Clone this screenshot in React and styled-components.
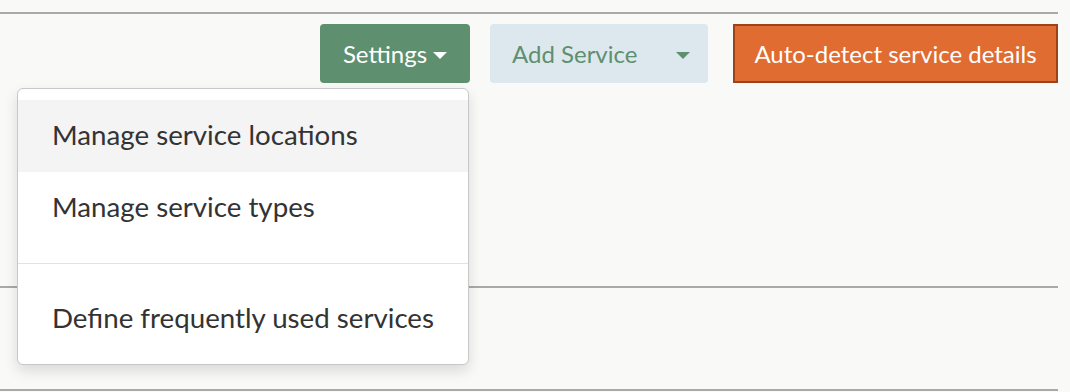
import React from "react";
import styled, { createGlobalStyle } from "styled-components";

const GlobalStyle = createGlobalStyle`
  html, body {
    margin: 0;
    background: #f9f9f7;
    font-family: Lato, "Open Sans", sans-serif;
  }
`;

const Page = styled.div`
  width: 1058px;
  padding-top: 12px;
`;

const Section = styled.div`
  border-top: 2px solid #a9a9a9;
  height: ${props => props.height}px;
`;

const Toolbar = styled.div`
  display: flex;
  justify-content: flex-end;
  align-items: flex-start;
  padding-top: 10px;
`;

const DropdownWrap = styled.div`
  position: relative;
  margin-right: 20px;
`;

const Button = styled.button`
  display: flex;
  align-items: center;
  height: 59px;
  border-radius: 4px;
  border: none;
  font-family: Lato, sans-serif;
  font-size: 24px;
  white-space: nowrap;
  padding: 0;
  cursor: pointer;
`;

const SettingsButton = styled(Button)`
  width: 150px;
  background: #5e8f6f;
  color: #fff;
  justify-content: center;
  gap: 6px;
`;

const AddButton = styled(Button)`
  width: 218px;
  background: #dce8ee;
  color: #5e8f6f;
  justify-content: space-between;
  padding: 0 18px 0 22px;
  margin-right: 25px;
`;

const AutoButton = styled(Button)`
  width: 325px;
  background: #e06c32;
  color: #fff;
  border: 2px solid #9c4318;
  border-radius: 0;
  justify-content: center;
`;

const Caret = styled.span`
  width: 0;
  height: 0;
  border-left: 7px solid transparent;
  border-right: 7px solid transparent;
  border-top: 7px solid ${props => props.color};
  margin-top: 3px;
`;

const Menu = styled.ul`
  position: absolute;
  top: 64px;
  right: 1px;
  width: 450px;
  margin: 0;
  padding: 11px 0 9px;
  list-style: none;
  background: #fff;
  border: 1px solid #c8c8c8;
  border-radius: 6px;
  box-shadow: 0 6px 14px rgba(0, 0, 0, 0.13);
  z-index: 2;
`;

const MenuItem = styled.li`
  height: 69px;
  line-height: 69px;
  padding: 0 0 3px 34px;
  font-size: 27.7px;
  white-space: nowrap;
  color: #333;
  background: ${props => (props.active ? "#f4f4f4" : "transparent")};
`;

const Divider = styled.li`
  height: 1px;
  margin: 19px 0;
  background: #e2e2e2;
`;

export default function App() {
  return (
    <>
      <GlobalStyle />
      <Page>
        <Section height={272}>
          <Toolbar>
            <DropdownWrap>
              <SettingsButton>
                Settings <Caret color="#fff" />
              </SettingsButton>
              <Menu>
                <MenuItem active>Manage service locations</MenuItem>
                <MenuItem>Manage service types</MenuItem>
                <Divider />
                <MenuItem>Define frequently used services</MenuItem>
              </Menu>
            </DropdownWrap>
            <AddButton>
              Add Service <Caret color="#5e8f6f" />
            </AddButton>
            <AutoButton>Auto-detect service details</AutoButton>
          </Toolbar>
        </Section>
        <Section height={101} />
        <Section height={0} />
      </Page>
    </>
  );
}
